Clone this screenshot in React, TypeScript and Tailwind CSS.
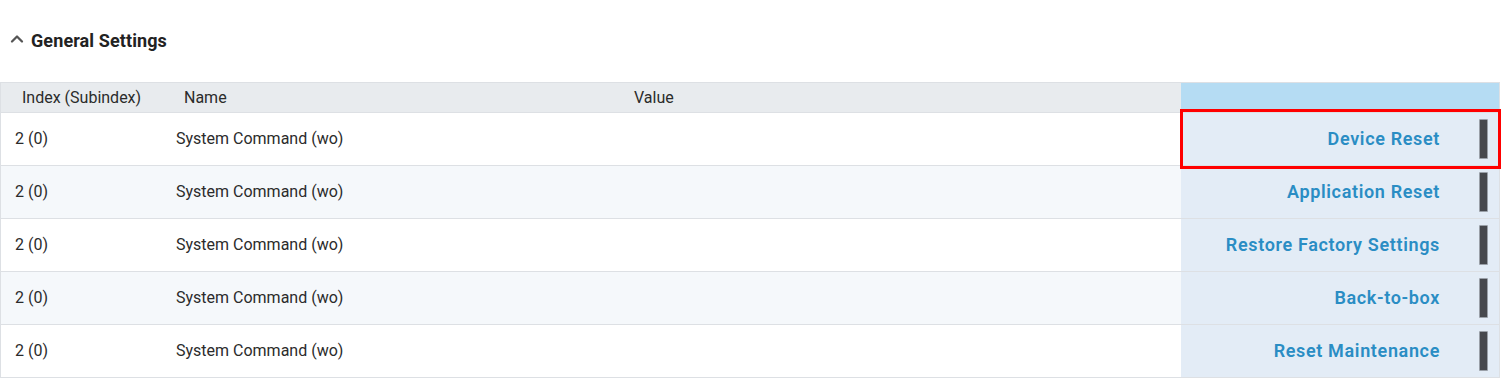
import { ChevronUp } from 'lucide-react'

type Row = { index: string; name: string; value: string; action: string }

const rows: Row[] = [
  { index: '2 (0)', name: 'System Command (wo)', value: '', action: 'Device Reset' },
  { index: '2 (0)', name: 'System Command (wo)', value: '', action: 'Application Reset' },
  { index: '2 (0)', name: 'System Command (wo)', value: '', action: 'Restore Factory Settings' },
  { index: '2 (0)', name: 'System Command (wo)', value: '', action: 'Back-to-box' },
  { index: '2 (0)', name: 'System Command (wo)', value: '', action: 'Reset Maintenance' },
]

export default function App() {
  return (
    <div className="h-[379px] w-[1502px] bg-white font-['Roboto',sans-serif] text-[16px] text-[#2b2b2b]">
      <div className="flex h-[82px] items-start pl-[7px] pt-[31px]">
        <ChevronUp className="mt-[-2px] h-[20px] w-[20px] text-[#555]" strokeWidth={2.75} />
        <h2 className="ml-[4px] text-[18px] font-bold leading-[20px] tracking-[0.1px] text-[#222]">
          General Settings
        </h2>
      </div>

      <div className="mr-[2px] border-x border-t border-[#dde0e4]">
        <div className="grid h-[30px] grid-cols-[167px_459px_554px_1fr] items-center border-b border-[#dde0e4] bg-[#e8ebee]">
          <div className="pl-[21px]">Index (Subindex)</div>
          <div className="pl-[16px]">Name</div>
          <div className="pl-[7px]">Value</div>
          <div className="h-full bg-[#b5dcf3]" />
        </div>

        {rows.map((row, i) => (
          <div
            key={i}
            className={
              'grid h-[53px] grid-cols-[167px_459px_554px_1fr] items-center border-b border-[#dde0e4] ' +
              (i % 2 === 1 ? 'bg-[#f5f8fb]' : 'bg-white')
            }
          >
            <div className="pl-[14px]">{row.index}</div>
            <div className="pl-[8px]">{row.name}</div>
            <div className="pl-[7px]">{row.value}</div>
            <div className="relative flex h-full items-center justify-end bg-[#e3ecf6] pr-[11px]">
              <button className="mr-[39px] mt-[-1px] text-[18px] font-semibold tracking-[0.65px] text-[#2a8dc4]">
                {row.action}
              </button>
              <span className="h-[40px] w-[9px] rounded-[1px] border border-[#9aa0a8] bg-[#46484d]" />
              {i === 0 && (
                <span className="pointer-events-none absolute left-[-1px] right-[-2px] top-[-4px] bottom-[-4px] z-10 border-[3px] border-[#ff0000]" />
              )}
            </div>
          </div>
        ))}
      </div>
    </div>
  )
}
